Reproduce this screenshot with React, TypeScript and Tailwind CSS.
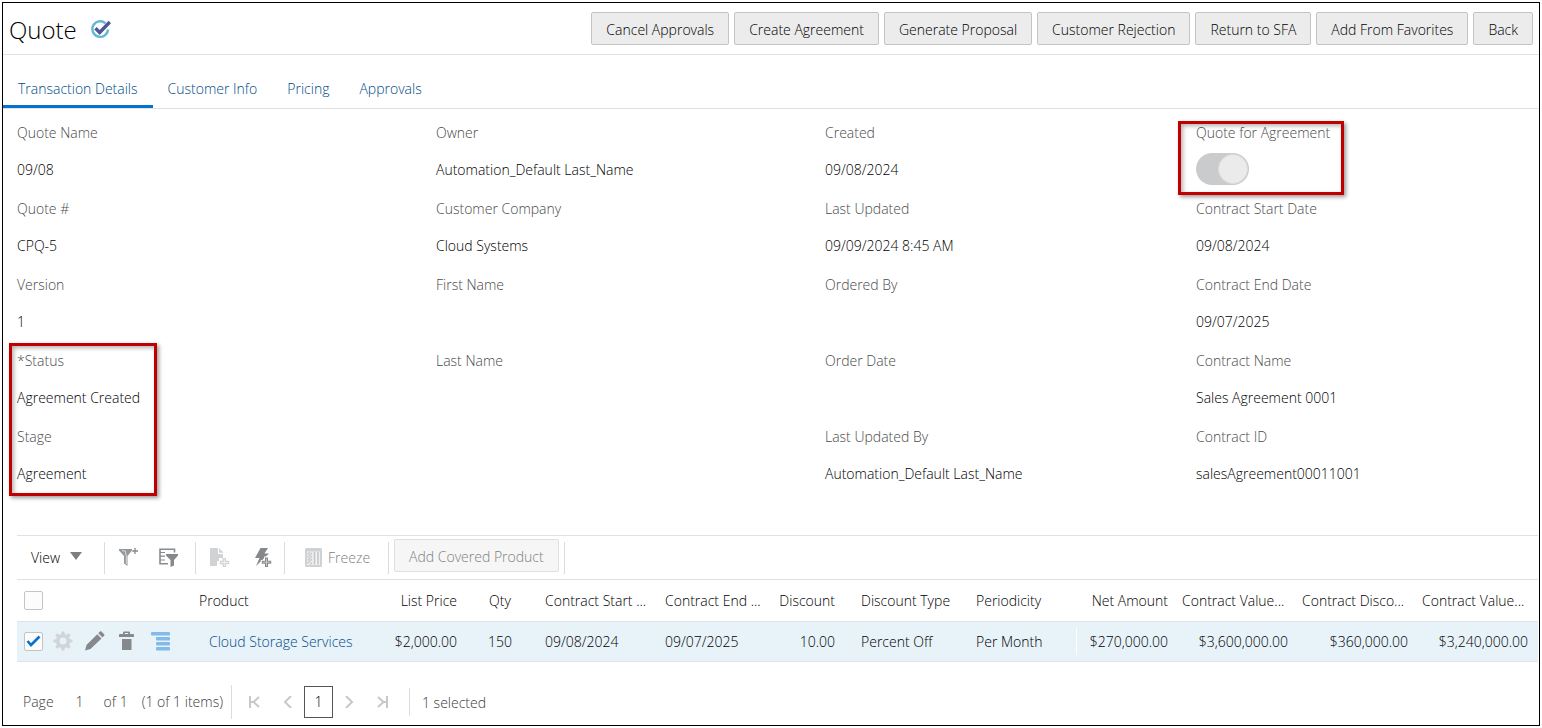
import type { ReactNode } from "react";
import clsx from "clsx";

const actions = [
  "Cancel Approvals",
  "Create Agreement",
  "Generate Proposal",
  "Customer Rejection",
  "Return to SFA",
  "Add From Favorites",
  "Back"
];

const tabs = ["Transaction Details", "Customer Info", "Pricing", "Approvals"];

const columns = [
  { name: "Product", width: "", head: "pl-1 text-left", cell: "pl-3.5 text-left", value: "Cloud Storage Services" },
  { name: "List Price", width: "w-[88px]", head: "pr-[10px] text-right", cell: "pr-[10px] text-right", value: "$2,000.00" },
  { name: "Qty", width: "w-[62px]", head: "pl-1 text-center", cell: "pl-1 text-center", value: "150" },
  { name: "Contract Start ...", width: "w-[120px]", head: "pl-4 text-left", cell: "pl-4 text-left", value: "09/08/2024" },
  { name: "Contract End ...", width: "w-[120px]", head: "pl-4 text-left", cell: "pl-4 text-left", value: "09/07/2025" },
  { name: "Discount", width: "w-[76px]", head: "pr-[10px] text-right", cell: "pr-[10px] text-right", value: "10.00" },
  { name: "Discount Type", width: "w-[115px]", head: "pl-4 text-left", cell: "pl-4 text-left", value: "Percent Off" },
  { name: "Periodicity", width: "w-[116px]", head: "pl-4 text-left", cell: "pl-4 text-left", value: "Per Month" },
  { name: "Net Amount", width: "w-[102px]", head: "pr-[10px] text-right", cell: "pr-[10px] text-right", value: "$270,000.00" },
  { name: "Contract Value...", width: "w-[120px]", head: "pl-1 text-left", cell: "pr-[10px] text-right", value: "$3,600,000.00" },
  { name: "Contract Disco...", width: "w-[120px]", head: "pl-1 text-left", cell: "pr-[10px] text-right", value: "$360,000.00" },
  { name: "Contract Value...", width: "w-[120px]", head: "pl-1 text-left", cell: "pr-[10px] text-right", value: "$3,240,000.00" }
];

function Field({ label, value }: { label: string; value?: string }) {
  return (
    <div className="h-[76px]">
      <dt className="text-[#4a4a4a]">{label}</dt>
      <dd className="mt-[17px]">{value}</dd>
    </div>
  );
}

function Highlight({ className }: { className: string }) {
  return (
    <div
      className={clsx(
        "pointer-events-none absolute border-3 border-[#c00000] shadow-[2px_2px_4px_rgba(0,0,0,0.4),inset_2px_2px_4px_rgba(0,0,0,0.3)]",
        className
      )}
    />
  );
}

function Separator({ className = "h-8" }: { className?: string }) {
  return <div className={clsx("w-px shrink-0 bg-[#dcdcdc]", className)} />;
}

function IconButton({ label, disabled, className, children }: { label: string; disabled?: boolean; className?: string; children: ReactNode }) {
  return (
    <button type="button" aria-label={label} disabled={disabled} className={clsx("grid size-5 shrink-0 place-items-center", className)}>
      {children}
    </button>
  );
}

function Checkbox({ label, checked }: { label: string; checked?: boolean }) {
  return (
    <span className="relative block size-[19px] shrink-0">
      <input
        type="checkbox"
        aria-label={label}
        defaultChecked={checked}
        className="peer block size-[19px] appearance-none rounded-xs border border-[#c4c4c4] bg-[#fcfcfc]"
      />
      <svg viewBox="0 0 19 19" className="pointer-events-none absolute inset-0 hidden size-[19px] peer-checked:block" fill="none">
        <path d="M3.5 9 7 13 15.5 4.500" stroke="#0572ce" strokeWidth="2.600" />
      </svg>
    </span>
  );
}

function FilterIcon() {
  return (
    <svg width="20" height="20" viewBox="0 0 20 20">
      <path d="M0 1h13v1.500L8.500 8v10L5 15.500V8L0 2.500z" fill="#94989b" />
      <path d="M3 2.800h3.200L7.300 8v8" stroke="#d8dadb" strokeWidth="1" fill="none" />
      <path d="M16 0v6M13.200 3h5.800" stroke="#85898c" strokeWidth="1.300" />
    </svg>
  );
}

function QueryIcon() {
  return (
    <svg width="20" height="20" viewBox="0 0 20 20">
      <path d="M15.500 4.500V1.200H1v14.600h8" fill="none" stroke="#878b8e" strokeWidth="1.600" />
      <path d="M1 4.500h5M1 8.200h5M1 12h5" stroke="#878b8e" strokeWidth="1.200" />
      <path d="M7 6h12v1.500L15 12v5.500L11.500 19v-7L7 7.500z" fill="#85898c" />
    </svg>
  );
}

function AddPageIcon() {
  return (
    <svg width="20" height="20" viewBox="0 0 20 20">
      <path d="M0 0h8v6h5v4H9v3H7v5H0z" fill="#d0d2d3" />
      <path d="M9 0l4.500 4.800H9z" fill="#d0d2d3" />
      <path d="M14.300 10v9M9.800 14.500h9.400" stroke="#d0d2d3" strokeWidth="3.400" />
      <path d="M14.300 11v7M10.800 14.500h7.400" stroke="#f2f2f2" strokeWidth="1" />
    </svg>
  );
}

function QuickAddIcon() {
  return (
    <svg width="20" height="20" viewBox="0 0 20 20">
      <path d="M6.500 0H14l-3.500 5.500H15L2 18l3.500-8H1z" fill="#85898c" />
      <path d="M12.500 8.500v11M6.800 14.200h11" stroke="#fff" strokeWidth="4.600" />
      <path d="M12.500 9.500v9.500M7.800 14.200h9.400" stroke="#85898c" strokeWidth="3" />
      <path d="M12.500 10.500v7.500M8.800 14.200h7.400" stroke="#d5d7d8" strokeWidth=".8" />
    </svg>
  );
}

function FreezeIcon() {
  return (
    <svg width="17" height="19" viewBox="0 0 17 19">
      <rect x="0" y="0" width="17" height="19" rx="1.500" fill="#cfd1d2" />
      <rect x="2" y="3.500" width="13" height="13.500" fill="#f1f1f1" />
      <path d="M2.500 6.500 5 4M2.500 9.500 7 5M2.500 12.500 7 8M2.500 15.500 7 11M5 16.500l2-2" stroke="#c4c6c7" strokeWidth="1.200" />
      <path d="M9.500 4v12.500M13 4v12.500" stroke="#c4c6c7" strokeWidth="1.600" />
    </svg>
  );
}

function GearIcon() {
  return (
    <svg width="20" height="20" viewBox="-10 -10 20 20">
      <circle r="5.300" fill="none" stroke="#d0d5d8" strokeWidth="3.600" />
      {[0, 45, 90, 135, 180, 225, 270, 315].map((angle) => (
        <path key={angle} d="M-2-6-1.300-9.500h2.600L2-6z" fill="#d0d5d8" transform={`rotate(${angle})`} />
      ))}
    </svg>
  );
}

function PencilIcon() {
  return (
    <svg width="20" height="20" viewBox="0 0 20 20" fill="#85898c">
      <path d="M0 19.500 1.500 14 12.300 3.200l4.200 4.200L5.500 18z" />
      <path d="m13.300 2.200 1.600-1.600q.8-.8 1.600 0l2.600 2.600q.8.800 0 1.600l-1.600 1.600z" />
    </svg>
  );
}

function TrashIcon() {
  return (
    <svg width="16" height="20" viewBox="0 0 16 20" fill="#85898c">
      <path d="M4 3V1.500Q4 .5 5 .5h5q1 0 1 1V3h3q1 0 1 1v2H0V4q0-1 1-1zm1.800-1v1h3.400V2z" />
      <path d="M3 8h9.500v11H3z" />
    </svg>
  );
}

function LinesIcon() {
  return (
    <svg width="20" height="20" viewBox="0 0 20 20" fill="#83bae8">
      <rect x="0" y="1" width="19" height="3.600" rx="1" />
      <rect x="5" y="6" width="14" height="3.600" rx="1" />
      <rect x="5" y="11" width="14" height="3.600" rx="1" />
      <rect x="5" y="16" width="14" height="3.600" rx="1" />
    </svg>
  );
}

function PagerIcon({ d }: { d: string }) {
  return (
    <svg width="12" height="12" viewBox="0 0 12 12" fill="none" stroke="#c6c8ca" strokeWidth="2">
      <path d={d} />
    </svg>
  );
}

export default function App() {
  return (
    <main className="p-0.5 font-['Open_Sans',sans-serif] text-sm leading-5 font-light text-black">
      <div className="border border-black bg-white">
        <header className="flex items-center justify-between border-b border-[#e2e2e2] px-1.5 py-[9px]">
          <div className="flex items-center gap-3.5 pt-0.5">
            <h1 className="text-2xl leading-7">Quote</h1>
            <svg width="20" height="20" viewBox="0 0 20 20" fill="none">
              <path d="M14.500 3.300A7.800 7.800 0 1 0 17 9.500" stroke="#62b8d3" strokeWidth="2.400" />
              <path d="m4.500 8.200 4.200 4.300L18.800 2" stroke="#4f5597" strokeWidth="3.400" />
            </svg>
          </div>
          <div className="flex gap-[5px]">
            {actions.map((action) => (
              <button key={action} type="button" className="h-[33px] rounded-xs border border-[#c4c4c4] bg-[#ececec] px-3.5 pt-0.5 whitespace-nowrap">
                {action}
              </button>
            ))}
          </div>
        </header>

        <nav className="flex border-b border-[#dfe1e2] pt-6">
          {tabs.map((tab, i) => (
            <a
              key={tab}
              href="#"
              className={clsx("border-b-3 px-[15px] pb-1.5 text-[#004b87]", i === 0 ? "border-[#0572ce]" : "border-transparent")}
            >
              {tab}
            </a>
          ))}
        </nav>

        <section className="grid grid-cols-[419fr_389fr_371fr_343fr] pt-3.5 pb-8 pl-3.5">
          <dl>
            <Field label="Quote Name" value="09/08" />
            <Field label="Quote #" value="CPQ-5" />
            <Field label="Version" value="1" />
            <div className="relative">
              <Field label="*Status" value="Agreement Created" />
              <Field label="Stage" value="Agreement" />
              <Highlight className="-top-2 bottom-[7px] -left-2 w-[148px]" />
            </div>
          </dl>
          <dl>
            <Field label="Owner" value="Automation_Default Last_Name" />
            <Field label="Customer Company" value="Cloud Systems" />
            <Field label="First Name" />
            <Field label="Last Name" />
          </dl>
          <dl>
            <Field label="Created" value="09/08/2024" />
            <Field label="Last Updated" value="09/09/2024 8:45 AM" />
            <Field label="Ordered By" />
            <Field label="Order Date" />
            <Field label="Last Updated By" value="Automation_Default Last_Name" />
          </dl>
          <div>
            <div className="relative h-[76px]">
              <label htmlFor="agreement" className="block text-[#4a4a4a]">Quote for Agreement</label>
              <input
                id="agreement"
                type="checkbox"
                role="switch"
                defaultChecked
                disabled
                className="mt-[10px] flex h-8 w-[53px] appearance-none justify-end rounded-full bg-[#c9cbcd] p-px before:size-[30px] before:rounded-full before:border before:border-[#dcdddf] before:bg-[#ebebeb]"
              />
              <Highlight className="-top-0.5 bottom-1 -left-[18px] w-[166px]" />
            </div>
            <dl>
              <Field label="Contract Start Date" value="09/08/2024" />
              <Field label="Contract End Date" value="09/07/2025" />
              <Field label="Contract Name" value="Sales Agreement 0001" />
              <Field label="Contract ID" value="salesAgreement00011001" />
            </dl>
          </div>
        </section>

        <section className="pr-px pl-3.5">
          <div className="flex h-[45px] items-center border-y border-[#dfe1e2] pl-3.5">
            <button type="button" className="flex items-center gap-2.5">
              View
              <svg width="12" height="8" viewBox="0 0 12 8" className="mb-1" fill="#7b7f82"><path d="M0 0h12L6 8z" /></svg>
            </button>
            <Separator className="ml-[22px] h-8" />
            <IconButton label="Filter" className="ml-3.5"><FilterIcon /></IconButton>
            <IconButton label="Query by example" className="ml-5"><QueryIcon /></IconButton>
            <Separator className="ml-4 h-8" />
            <IconButton label="Add page" disabled className="ml-3.5"><AddPageIcon /></IconButton>
            <IconButton label="Quick add" className="ml-6"><QuickAddIcon /></IconButton>
            <Separator className="ml-2.5 h-8" />
            <button type="button" disabled className="ml-5 flex items-center gap-1.5 text-[#808080]">
              <FreezeIcon />
              Freeze
            </button>
            <Separator className="ml-[18px] h-8" />
            <button type="button" disabled className="mx-[5px] mb-1 h-[33px] rounded-xs border border-[#dfdfdf] bg-[#f6f6f6] px-3.5 pt-0.5 text-[#808080]">
              Add Covered Product
            </button>
            <Separator />
          </div>

          <table className="w-full table-fixed border-collapse whitespace-nowrap">
            <colgroup>
              <col className="w-[178px]" />
              {columns.map((column, i) => <col key={i} className={column.width} />)}
            </colgroup>
            <thead>
              <tr className="h-[41px] border-b border-[#dfe4e7]">
                <th className="pl-[7px]"><Checkbox label="Select all" /></th>
                {columns.map((column, i) => <th key={i} className={clsx("pt-0.5 font-light", column.head)}>{column.name}</th>)}
              </tr>
            </thead>
            <tbody>
              <tr className="h-10 border-b border-[#dfe4e7] bg-[#e7f2f9]">
                <td className="pl-[7px]">
                  <div className="flex items-center">
                    <Checkbox label="Select row" checked />
                    <IconButton label="Settings" disabled className="ml-[10px]"><GearIcon /></IconButton>
                    <IconButton label="Edit" className="ml-3"><PencilIcon /></IconButton>
                    <IconButton label="Delete" className="ml-3"><TrashIcon /></IconButton>
                    <IconButton label="Details" className="ml-3.5"><LinesIcon /></IconButton>
                  </div>
                </td>
                {columns.map((column, i) => (
                  <td key={i} className={clsx("relative pt-0.5", column.cell)}>
                    {column.name === "Net Amount" && <span className="absolute inset-y-1.5 left-0 w-px bg-white" />}
                    {i === 0 ? <a href="#" className="text-[#004b87]">{column.value}</a> : column.value}
                  </td>
                ))}
              </tr>
            </tbody>
          </table>
        </section>

        <footer className="flex h-[63px] items-center pt-[17px] pl-5 text-[#3a3a3a]">
          <label htmlFor="page">Page</label>
          <input id="page" defaultValue="1" className="ml-2 w-9 text-center" />
          <span className="ml-1.5">of 1</span>
          <span className="ml-3.5">(1 of 1 items)</span>
          <Separator className="ml-2 h-[34px]" />
          <IconButton label="First page" disabled className="ml-3"><PagerIcon d="M2 0v12M11 1 5.500 6l5.500 5M2 6h3" /></IconButton>
          <IconButton label="Previous page" disabled className="ml-3.5"><PagerIcon d="M9 0 3 6l6 6" /></IconButton>
          <button type="button" aria-current="page" className="ml-1.5 h-8 w-[29px] border border-[#555] text-black">1</button>
          <IconButton label="Next page" disabled className="ml-1.5"><PagerIcon d="m3 0 6 6-6 6" /></IconButton>
          <IconButton label="Last page" disabled className="ml-3.5"><PagerIcon d="M10 0v12M1 1l5.500 5L1 11M10 6H7" /></IconButton>
          <Separator className="ml-4 h-7" />
          <span className="ml-3 pt-0.5">1 selected</span>
        </footer>
      </div>
    </main>
  );
}
